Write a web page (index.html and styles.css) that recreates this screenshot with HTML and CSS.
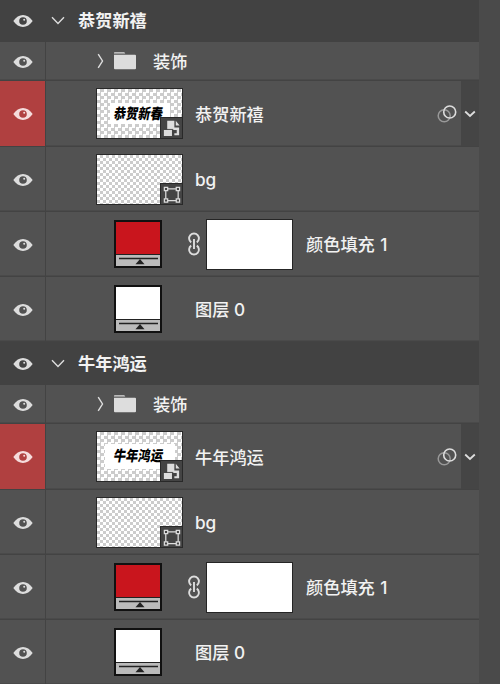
FILE: index.html
```
<!DOCTYPE html>
<html lang="zh-CN">
<head>
<meta charset="utf-8">
<title>图层</title>
<link rel="stylesheet" href="styles.css">
</head>
<body>
<svg width="0" height="0" class="defs">
  <symbol id="eye" viewBox="0 0 20 14"><path fill="currentColor" fill-rule="evenodd" d="M.3 7C3 3.200 6.300 1 10 1s7 2.200 9.700 6C17 10.800 13.700 13 10 13S3 10.800.3 7Zm9.700-3.800a3.800 3.800 0 1 0 0 7.600 3.800 3.800 0 0 0 0-7.600Z"/><circle cx="11.200" cy="5.800" r="1" fill="currentColor"/></symbol>
  <symbol id="down" viewBox="0 0 14 9"><path d="M1 1.200 7 7.400l6-6.200" fill="none" stroke="#ddd" stroke-width="1.400"/></symbol>
  <symbol id="right" viewBox="0 0 8 16"><path d="M1.200 1.200 5.500 8l-4.300 6.800" fill="none" stroke="#ddd" stroke-width="1.400"/></symbol>
  <symbol id="folder" viewBox="0 0 22 18"><path d="M0 .7Q0 .2.7.2h9.600l1 1.200H0ZM0 2.800h21q1 0 1 1v12.500q0 1-1 1H1q-1 0-1-1Z" fill="#ddd"/></symbol>
  <symbol id="smart" viewBox="0 0 22 21"><path d="M6.500 3H14v7h5v8h-5v-2h2.500v-3.500H6.500ZM15.500 3l4 5h-4ZM3 12.500h8.500V19H3Z" fill="#ddd"/><path d="M5 12h7.500v4" fill="none" stroke="#444" stroke-width="1"/></symbol>
  <symbol id="shape" viewBox="0 0 22 21"><path d="M5 6v10M18 6v10M6 5h11M6 17.500h11" stroke="#ddd" stroke-width="1.300"/><g fill="#444" stroke="#ddd" stroke-width="1.300"><path d="M3.500 3.500H7V7H3.500ZM16 3.500h3.500V7H16ZM3.500 15.500H7V19H3.500ZM16 15.500h3.500V19H16Z"/></g></symbol>
  <symbol id="link" viewBox="0 0 14 24"><path d="M4.200 10.400A4.900 4.900 0 1 1 9.800 10.400M4.200 13.600A4.900 4.900 0 1 0 9.800 13.600M7 7v10" fill="none" stroke="#ddd" stroke-width="1.900"/></symbol>
  <symbol id="blend" viewBox="0 0 20 18"><circle cx="7.200" cy="10.700" r="6" fill="none" stroke="#999" stroke-width="1.500"/><circle cx="12.700" cy="7" r="6" fill="none" stroke="#ddd" stroke-width="1.600"/></symbol>
  <symbol id="slider" viewBox="0 0 44 11"><path d="M3 3.500h39" stroke="#222" stroke-width="1.600"/><path d="m24 4 4.500 5.200h-9Z" fill="#222"/></symbol>
  <symbol id="caret" viewBox="0 0 12 8"><path d="m1.200 1.500 4.800 4.500 4.800-4.500" fill="none" stroke="#ddd" stroke-width="1.800"/></symbol>
</svg>
<main class="panel">
  <section class="group">
    <header class="row head"><div class="vis"><svg class="eye"><use href="#eye"/></svg></div><svg class="down"><use href="#down"/></svg><h2 class="name">恭贺新禧</h2></header>
    <div class="row sub"><div class="vis"><svg class="eye"><use href="#eye"/></svg></div><svg class="right"><use href="#right"/></svg><svg class="folder"><use href="#folder"/></svg><span class="name">装饰</span></div>
    <div class="row smart"><div class="vis red"><svg class="eye"><use href="#eye"/></svg></div><div class="thumb"><div class="art"><span class="brush">恭贺新春</span></div><svg class="badge"><use href="#smart"/></svg></div><span class="name">恭贺新禧</span><svg class="blend"><use href="#blend"/></svg><div class="more"><svg class="caret"><use href="#caret"/></svg></div></div>
    <div class="row"><div class="vis"><svg class="eye"><use href="#eye"/></svg></div><div class="thumb fine"><svg class="badge"><use href="#shape"/></svg></div><span class="name">bg</span></div>
    <div class="row"><div class="vis"><svg class="eye"><use href="#eye"/></svg></div><div class="fill"><div class="color crimson"></div><svg class="slider"><use href="#slider"/></svg></div><svg class="link"><use href="#link"/></svg><div class="mask"></div><span class="name spaced">颜色填充 1</span></div>
    <div class="row"><div class="vis"><svg class="eye"><use href="#eye"/></svg></div><div class="fill plain"><div class="color"></div><svg class="slider"><use href="#slider"/></svg></div><span class="name">图层 0</span></div>
  </section>
  <section class="group">
    <header class="row head"><div class="vis"><svg class="eye"><use href="#eye"/></svg></div><svg class="down"><use href="#down"/></svg><h2 class="name">牛年鸿运</h2></header>
    <div class="row sub"><div class="vis"><svg class="eye"><use href="#eye"/></svg></div><svg class="right"><use href="#right"/></svg><svg class="folder"><use href="#folder"/></svg><span class="name">装饰</span></div>
    <div class="row smart"><div class="vis red"><svg class="eye"><use href="#eye"/></svg></div><div class="thumb"><div class="art wide"><span class="brush">牛年鸿运</span></div><svg class="badge"><use href="#smart"/></svg></div><span class="name">牛年鸿运</span><svg class="blend"><use href="#blend"/></svg><div class="more"><svg class="caret"><use href="#caret"/></svg></div></div>
    <div class="row"><div class="vis"><svg class="eye"><use href="#eye"/></svg></div><div class="thumb fine"><svg class="badge"><use href="#shape"/></svg></div><span class="name">bg</span></div>
    <div class="row"><div class="vis"><svg class="eye"><use href="#eye"/></svg></div><div class="fill"><div class="color crimson"></div><svg class="slider"><use href="#slider"/></svg></div><svg class="link"><use href="#link"/></svg><div class="mask"></div><span class="name spaced">颜色填充 1</span></div>
    <div class="row"><div class="vis"><svg class="eye"><use href="#eye"/></svg></div><div class="fill plain"><div class="color"></div><svg class="slider"><use href="#slider"/></svg></div><span class="name">图层 0</span></div>
  </section>
</main>
</body>
</html>
```
FILE: styles.css
```
* { box-sizing: border-box; }
html, body { height: 100%; }
body { margin: 0; overflow: hidden; background: #4a4a4a; color: #f2f2f2; font: 500 17.2px/24px Inter, "Noto Sans CJK SC", sans-serif; }
svg { flex: none; display: block; }
.defs { position: absolute; }
.panel { width: 479px; margin-top: -1px; }
.row { display: flex; align-items: center; height: 65px; padding-bottom: 1px; background: #525252; box-shadow: inset 0 -1.500px #434343; white-space: nowrap; }
.vis { width: 46px; align-self: stretch; flex: none; display: flex; align-items: center; justify-content: center; border-right: 1px solid #434343; color: #ddd; padding-top: 1px; }
.eye { width: 20px; height: 14px; }
.red { background: #b04040; color: #f5dcdc; }
.head { height: 43px; background: #424242; box-shadow: none; padding: 1px 0 0; }
.head .vis { border-color: #424242; padding-top: 0; }
.down { width: 14px; height: 9px; margin: -2px 0 0 5px; }
.head .name { margin: 0 0 0 13px; padding: 0; font-size: 17.2px; font-weight: 700; }
.sub { height: 39px; }
.right { width: 8px; height: 16px; margin-left: 51px; }
.folder { width: 22px; height: 18px; margin-left: 9px; }
.sub .name { margin-left: 17px; }
.smart { height: 66px; }
.thumb { position: relative; flex: none; width: 87px; height: 51px; margin-left: 50px; border: 1.500px solid #292929; background: repeating-conic-gradient(#ccc 0 25%, #fff 0 50%) 0 0 / 7px 7px; display: flex; align-items: center; justify-content: center; }
.fine { background-size: 6px 6px; }
.name { margin-left: 12px; padding-top: 2px; }
.badge { position: absolute; right: 0; bottom: 0; width: 22px; height: 21px; background: #444; border: solid #292929; border-width: 1px 0 0 1px; }
.art { width: 60px; height: 21px; background: #fff; color: #000; font: 900 12.200px/20px "Noto Sans CJK SC", sans-serif; text-align: center; }
.brush { display: inline-block; margin-left: -1px; transform: skewX(-10deg) scaleY(1.200); letter-spacing: .1px; }
.wide { width: 70px; height: 25px; line-height: 23px; }
.blend { width: 20px; height: 18px; margin-left: auto; margin-right: 4px; }
.more { width: 18px; align-self: stretch; background: #454545; display: flex; align-items: center; justify-content: center; }
.caret { width: 12px; height: 8px; }
.fill { width: 48px; height: 48px; margin-left: 68px; border: 2px solid #111; flex: none; background: #bbb; }
.color { height: 33px; border-bottom: 1px solid #222; background: #fff; }
.crimson { background: #c9151d; }
.slider { width: 44px; height: 11px; }
.link { width: 14px; height: 24px; margin-left: 25px; }
.mask { width: 87px; height: 51px; margin-left: 5px; border: 1.500px solid #252525; background: #fff; flex: none; }
.spaced { word-spacing: 1px; margin-left: 13px; }
.plain + .name { margin-left: 33px; }
```
